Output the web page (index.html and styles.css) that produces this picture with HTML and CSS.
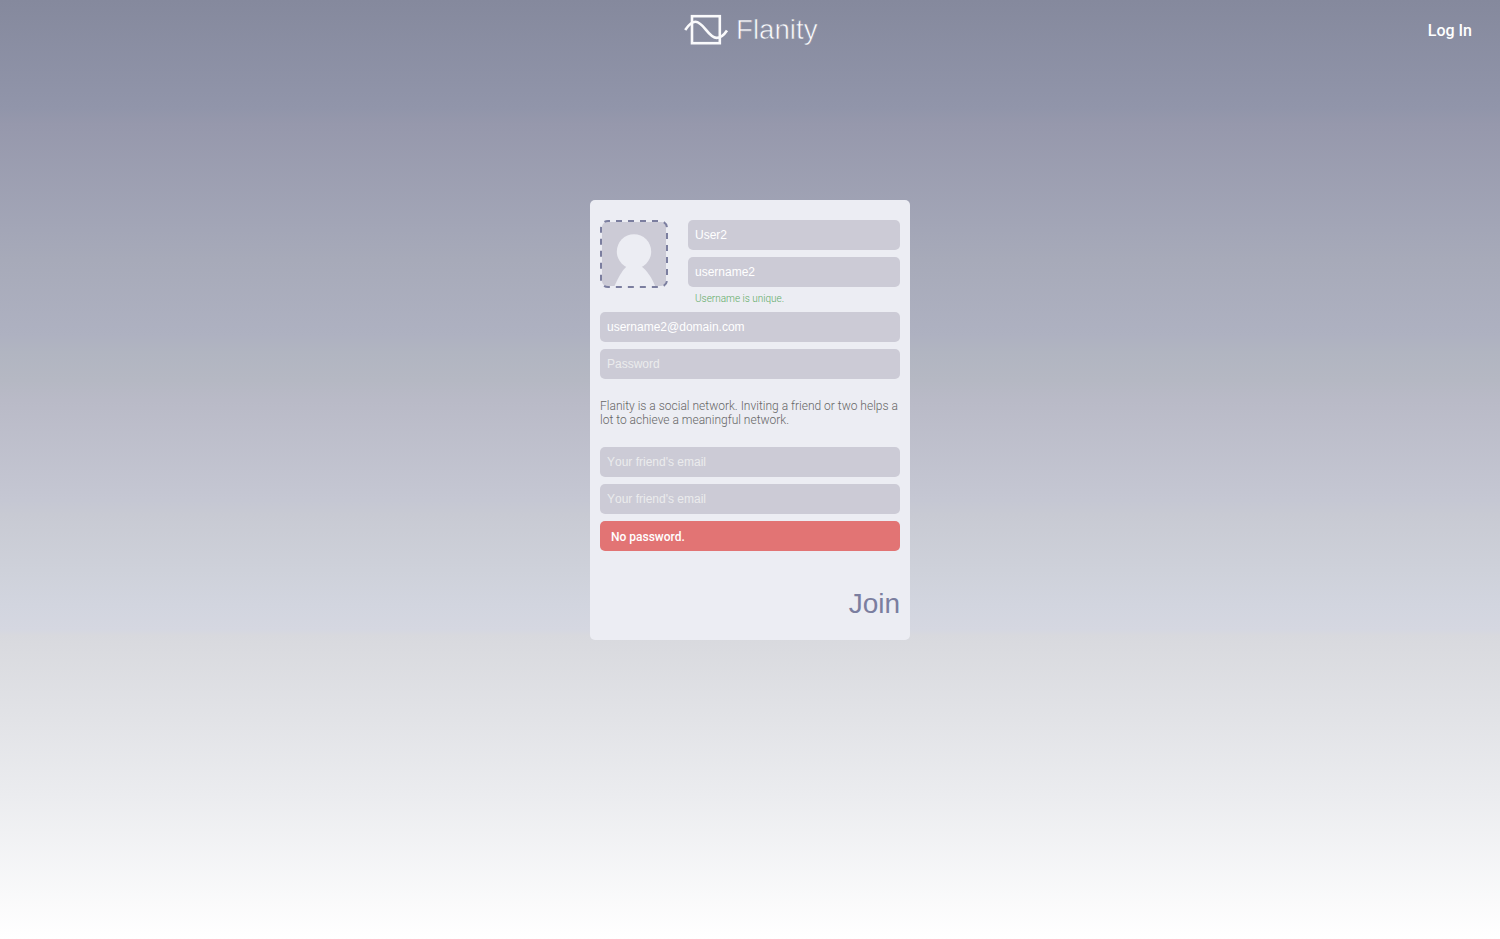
FILE: index.html
```html
<!DOCTYPE html>
<html lang="en">
<head>
<meta charset="utf-8">
<title>Flanity</title>
<link rel="stylesheet" href="styles.css">
</head>
<body>
<header class="header">
  <a class="logo" aria-label="Flanity">
    <svg width="136" height="34" viewBox="684 13 136 34">
      <rect x="692" y="16.2" width="27.8" height="27" fill="none" stroke="#fafafc" stroke-width="2.6"/>
      <path d="M685.2 30C688.5 25 691.5 21.8 695.5 21.8C703.5 21.8 708.5 37.9 716.5 37.9C720.5 37.9 724 35 727 30.5" fill="none" stroke="#fafafc" stroke-width="2.6"/>
      <text class="logo-text" x="736" y="39" textLength="81.5" lengthAdjust="spacingAndGlyphs">Flanity</text>
    </svg>
  </a>
  <a class="login">Log In</a>
</header>
<main class="card">
  <div class="identity">
    <svg class="avatar" width="68" height="68" viewBox="0 0 68 68">
      <rect class="avatar-fill" x="2" y="2" width="64" height="64" rx="5"/>
      <g class="avatar-person">
        <circle cx="34" cy="31.5" r="17.2"/>
        <path d="M14.5 66C18 58 21.5 51 27 46H41C47.5 51 52 58 55 66Z"/>
      </g>
      <rect class="avatar-border" x="1" y="1" width="66" height="66" rx="7"/>
    </svg>
    <div class="names">
      <input class="field" type="text" value="User2">
      <input class="field" type="text" value="username2">
      <p class="hint">Username is unique.</p>
    </div>
  </div>
  <div class="group">
    <input class="field" type="text" value="username2@domain.com">
    <input class="field" type="password" placeholder="Password">
  </div>
  <p class="invite">Flanity is a social network. Inviting a friend or two helps a lot to achieve a meaningful network.</p>
  <div class="group">
    <input class="field" type="text" placeholder="Your friend's email">
    <input class="field" type="text" placeholder="Your friend's email">
    <div class="error">No password.</div>
  </div>
  <button class="join">Join</button>
</main>
</body>
</html>
```
FILE: styles.css
```css
* { box-sizing: border-box; }
body {
  margin: 0;
  height: 939px;
  overflow: hidden;
  font-family: Roboto, sans-serif;
  background: linear-gradient(#85899d 0, #9195aa 108px, #9698ac 124px, #a3a6b7 230px, #a7aab9 260px, #aeb1c1 335px, #b1b5c1 352px, #b5b8c3 380px, #b9bac7 400px, #c5c7d3 500px, #c8cad3 515px, #ced1da 570px, #d2d5df 605px, #d5d7e1 630px, #d8d9de 635px, #ebecef 795px, #fff 939px);
}
.header {
  display: grid;
  grid-template-columns: 1fr auto 1fr;
  align-items: center;
  height: 60px;
  padding: 0 28px;
}
.logo { grid-column: 2; display: block; height: 34px; margin-left: 4px; }
.logo svg { display: block; }
.logo-text { font: 28px "Liberation Sans", sans-serif; fill: #fafafc; stroke: #898da1; stroke-width: 0.6; }
.login { justify-self: end; font-size: 16px; font-weight: 500; color: #fff; }
.card {
  width: 320px;
  height: 440px;
  margin: 140px auto 0;
  padding: 20px 10px;
  border-radius: 5px;
  background: #ecedf3;
}
.identity { display: flex; gap: 20px; height: 92px; }
.avatar { display: block; flex: none; }
.avatar-fill { fill: #cccbd6; }
.avatar-person { fill: #ecedf3; }
.avatar-border {
  fill: none;
  stroke: #7b7e9f;
  stroke-width: 2;
  stroke-dasharray: 6 6;
  stroke-dashoffset: 4;
}
.names, .group { display: flex; flex-direction: column; gap: 7px; }
.names { flex: 1; }
.field {
  width: 100%;
  height: 30px;
  padding: 0 7px;
  border: 0;
  border-radius: 5px;
  background: #cccbd6;
  color: #fff;
  font: 12px "Liberation Sans", sans-serif;
  font-kerning: none;
}
.field::placeholder { color: #ebebed; opacity: 1; }
.hint { margin: -2px 7px 0; font-size: 10px; line-height: 14px; font-weight: 300; color: #5eab65; }
.invite { margin: 20px 0; font-size: 12px; line-height: 14px; font-weight: 300; color: #666; }
.error {
  height: 30px;
  padding: 1px 11px 0;
  border-radius: 5px;
  background: #e27474;
  color: #fff;
  font-size: 12px;
  line-height: 31px;
  font-weight: 500;
}
.join {
  display: block;
  margin: 37px 0 0 auto;
  padding: 0;
  border: 0;
  background: none;
  color: #7b7e9f;
  font: 28px/32px "Liberation Sans", sans-serif;
}
```
